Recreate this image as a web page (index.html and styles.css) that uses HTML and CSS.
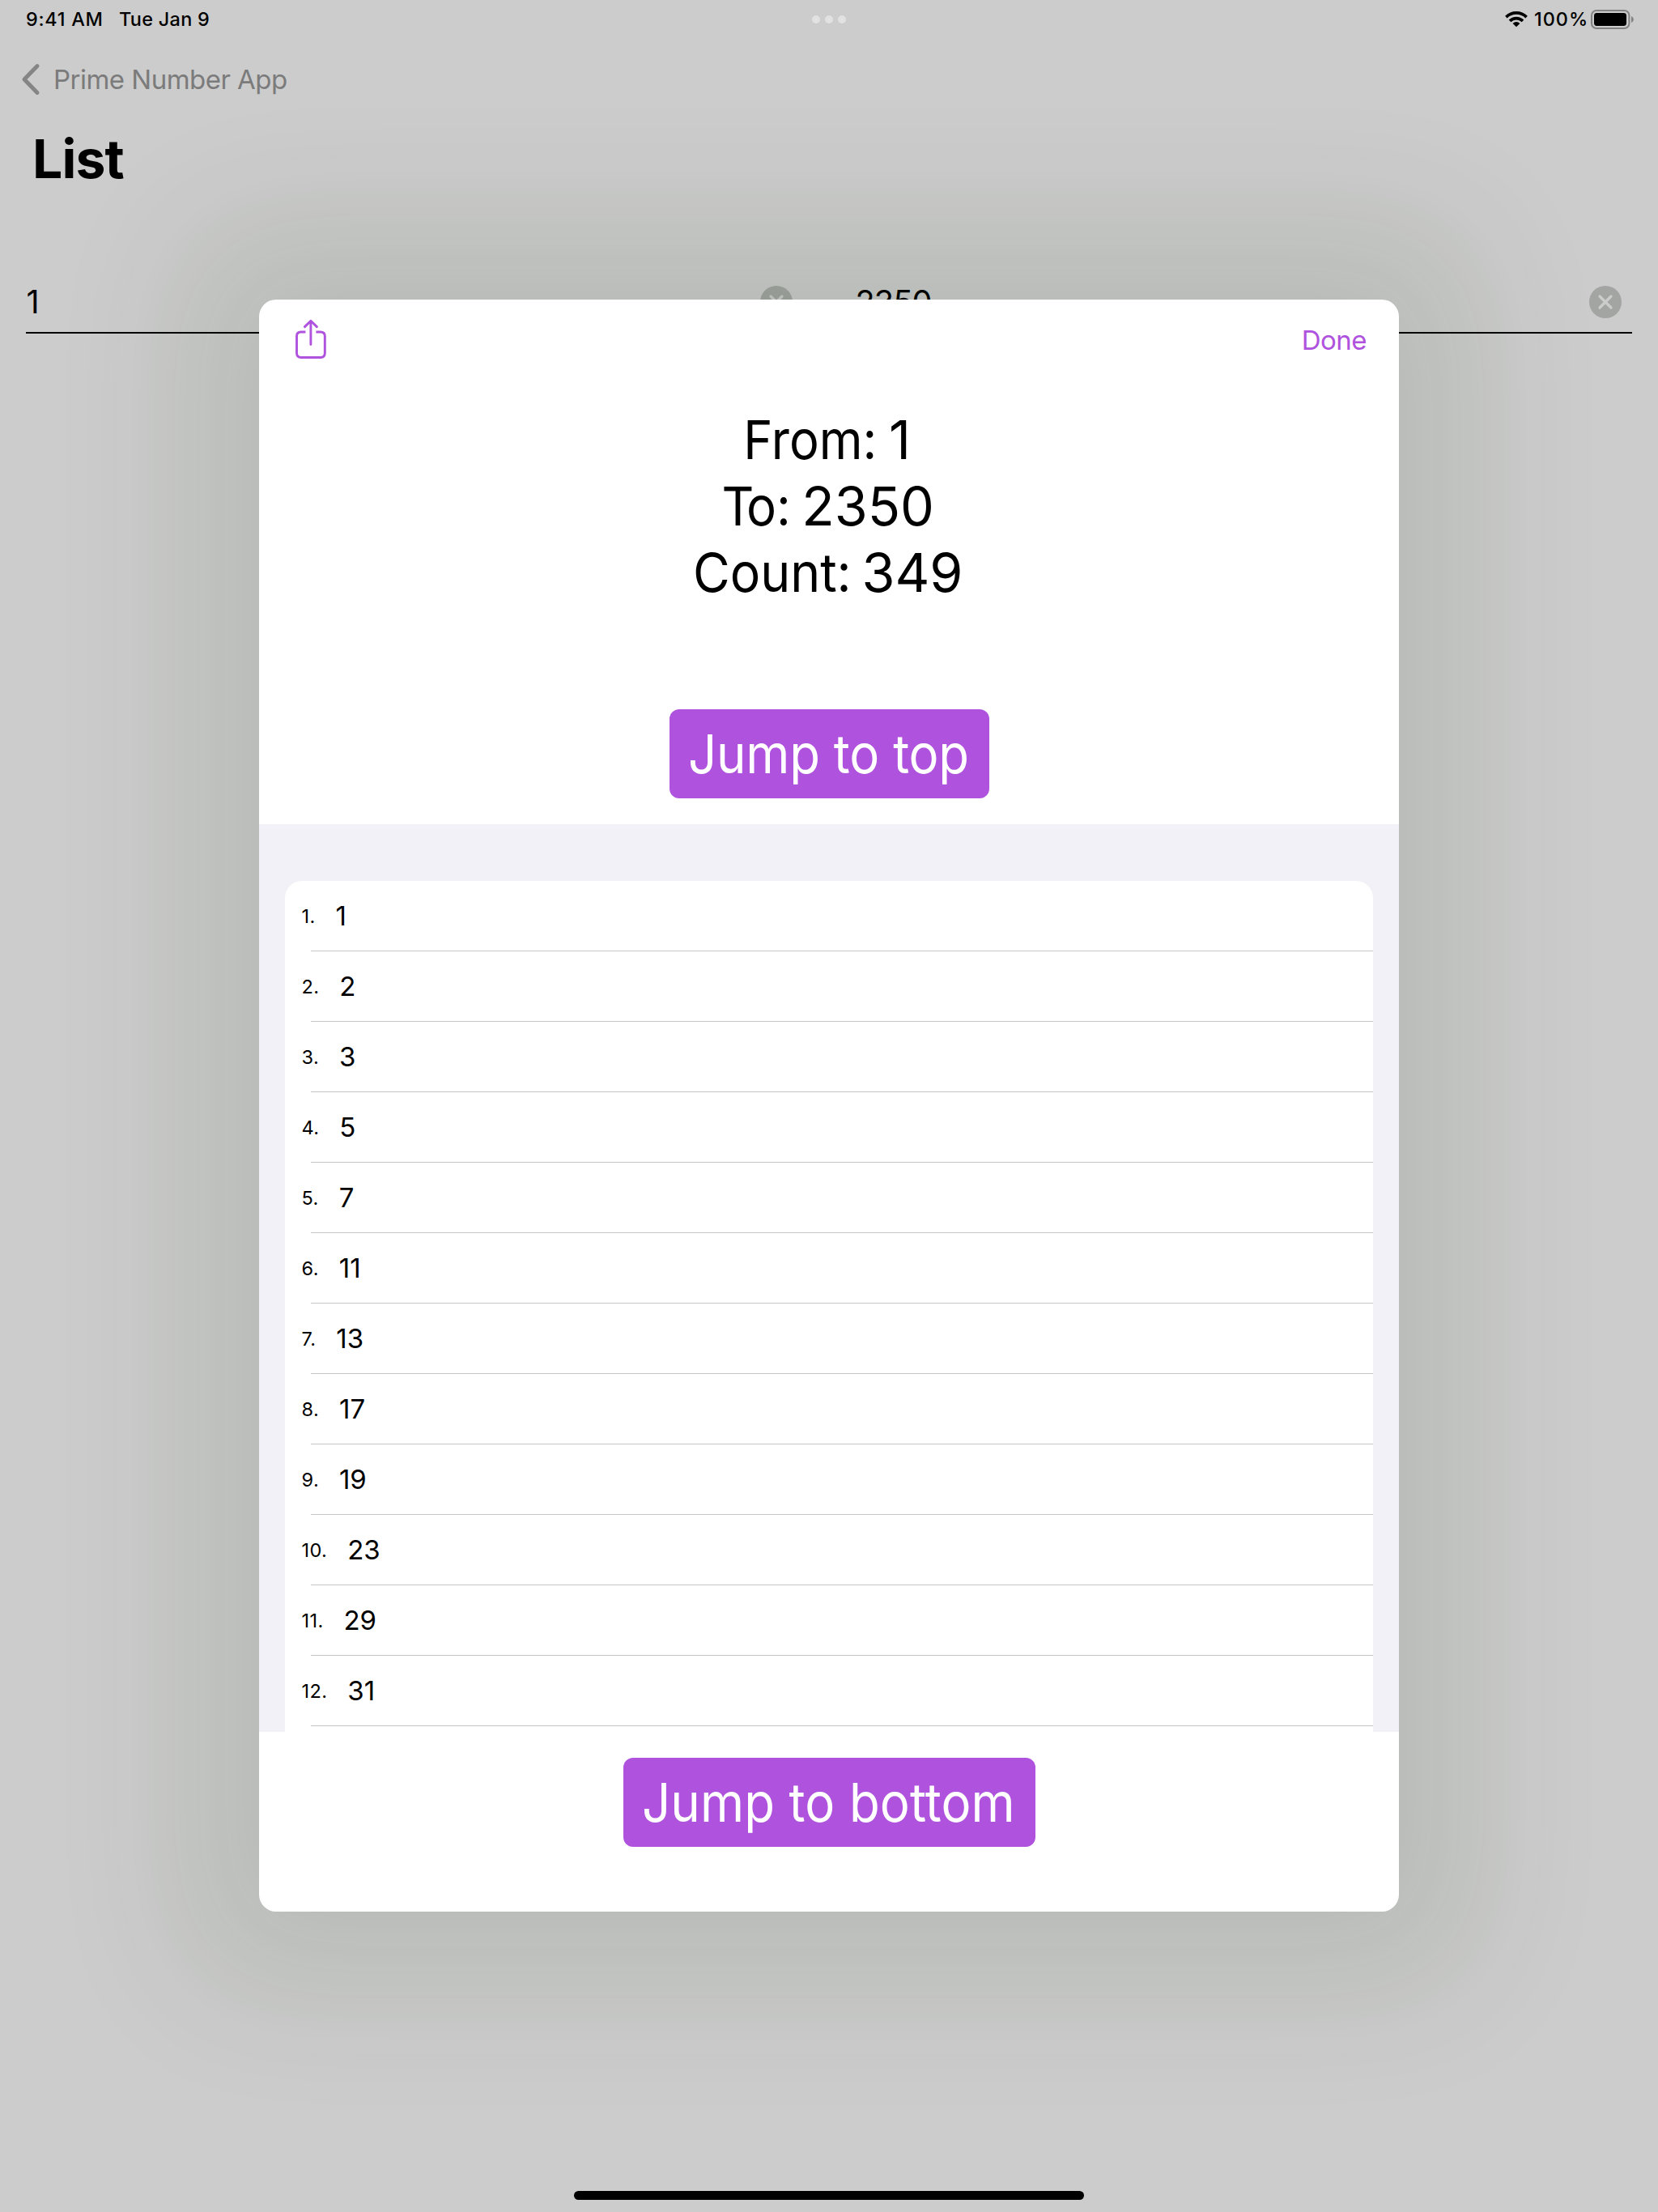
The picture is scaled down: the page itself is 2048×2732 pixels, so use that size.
FILE: index.html
```html
<!DOCTYPE html>
<html lang="en">
<head>
<meta charset="utf-8">
<title>List</title>
<link rel="stylesheet" href="styles.css">
</head>
<body>
<div class="screen">
  <header class="status-bar">
    <span class="status-time">9:41 AM</span>
    <span class="status-date">Tue Jan 9</span>
    <span class="status-right">
      <svg class="wifi" width="28" height="22" viewBox="0 0 28 22">
        <g fill="none" stroke="#000" stroke-width="3.7">
          <path d="M1.4 8.1 A18 18 0 0 1 26.6 8.1"/>
          <path d="M6 12.9 A11.3 11.3 0 0 1 22 12.9"/>
        </g>
        <path d="M14 20.3 L9.6 15.9 A6.3 6.3 0 0 1 18.4 15.9 Z"/>
      </svg>
      <span class="status-percent">100%</span>
      <svg class="battery" width="54" height="24" viewBox="0 0 54 24">
        <rect x="1" y="1" width="46.4" height="22" rx="6" fill="none" stroke="#828282" stroke-width="2"/>
        <rect x="4" y="4" width="40" height="16" rx="3.4"/>
        <path d="M50 8 C53.8 9.4 53.8 14.6 50 16 Z" fill="#828282"/>
      </svg>
    </span>
    <span class="multitask"><i></i><i></i><i></i></span>
  </header>

  <nav class="nav-bar">
    <svg width="24" height="40" viewBox="0 0 24 40"><path d="M20 3.6 L4 20 L20 36.4" fill="none" stroke="#858585" stroke-width="5" stroke-linecap="round" stroke-linejoin="round"/></svg>
    <span class="nav-back">Prime Number App</span>
  </nav>
  <h1 class="page-title">List</h1>

  <div class="fields">
    <div class="field">
      <span class="field-value">1</span>
      <svg class="clear" width="40" height="40" viewBox="0 0 40 40"><circle cx="20" cy="20" r="20"/><path d="M13 13 L27 27 M27 13 L13 27"/></svg>
    </div>
    <div class="field">
      <span class="field-value">2350</span>
      <svg class="clear" width="40" height="40" viewBox="0 0 40 40"><circle cx="20" cy="20" r="20"/><path d="M13 13 L27 27 M27 13 L13 27"/></svg>
    </div>
  </div>

  <main class="sheet">
    <div class="sheet-bar">
      <svg class="share" width="40" height="50" viewBox="0 0 40 50"><path d="M13.4 16 H7.6 Q2.5 16 2.5 21.1 V42 Q2.5 47.5 8 47.5 H32 Q37.3 47.5 37.3 42 V21.1 Q37.3 16 32 16 H26.4"/><path d="M19.9 31.5 V2.4 M12.4 9.6 L19.9 2.2 L27.4 9.6"/></svg>
      <span class="done">Done</span>
    </div>
    <div class="summary">
      <p class="line line-from"><span class="label">From:</span> <span>1</span></p>
      <p class="line line-to"><span class="label"><span class="kern">T</span>o:</span> <span>2350</span></p>
      <p class="line line-count"><span class="label">Count:</span> <span>349</span></p>
    </div>
    <div class="jump jump-top"><span>Jump to top</span></div>
    <section class="list-area">
      <ol class="list">
        <li><span class="index">1.</span><span class="number">1</span></li>
        <li><span class="index">2.</span><span class="number">2</span></li>
        <li><span class="index">3.</span><span class="number">3</span></li>
        <li><span class="index">4.</span><span class="number">5</span></li>
        <li><span class="index">5.</span><span class="number">7</span></li>
        <li><span class="index">6.</span><span class="number">11</span></li>
        <li><span class="index">7.</span><span class="number">13</span></li>
        <li><span class="index">8.</span><span class="number">17</span></li>
        <li><span class="index">9.</span><span class="number">19</span></li>
        <li><span class="index">10.</span><span class="number">23</span></li>
        <li><span class="index">11.</span><span class="number">29</span></li>
        <li><span class="index">12.</span><span class="number">31</span></li>
      </ol>
    </section>
    <div class="jump jump-bottom"><span>Jump to bottom</span></div>
  </main>

  <div class="home-indicator"></div>
</div>
</body>
</html>
```

FILE: styles.css
```css
* { box-sizing: border-box; margin: 0; padding: 0; }

body {
  font-family: Inter, "Liberation Sans", sans-serif;
  color: #000;
  background: #ccc;
}

.screen {
  position: relative;
  width: 2048px;
  height: 2732px;
  overflow: hidden;
  background: #ccc;
}

svg { display: block; flex: none; }
span { white-space: nowrap; }

/* status bar */
.status-bar {
  position: relative;
  display: flex;
  align-items: center;
  height: 47px;
  padding: 0 29px 0 32px;
  font-size: 23.4px;
  font-weight: 500;
}
.status-time { width: 115px; letter-spacing: 0.73px; }
.status-date { letter-spacing: 0.3px; }
.status-right { display: flex; align-items: center; margin-left: auto; }
.wifi { margin-right: 8px; }
.status-percent { width: 70px; letter-spacing: 1px; }
.battery { margin-top: 1px; }
.multitask {
  position: absolute;
  left: 1003px;
  top: 19px;
  display: flex;
  gap: 6px;
}
.multitask i { width: 10px; height: 10px; border-radius: 50%; background: #e1e1e1; }

/* navigation */
.nav-bar {
  display: flex;
  align-items: center;
  gap: 16px;
  height: 102px;
  padding-left: 26px;
}
.nav-back { font-size: 33px; letter-spacing: -0.52px; color: #7b7b7b; }
.page-title {
  height: 94px;
  padding-left: 40px;
  font-size: 66px;
  line-height: 94px;
  letter-spacing: -0.9px;
}

/* range inputs */
.fields { display: flex; gap: 64px; padding: 91px 32px 0; }
.field {
  display: flex;
  flex: 1;
  align-items: center;
  justify-content: space-between;
  height: 78px;
  padding: 2px 13px 0 0;
  border-bottom: 2px solid #000;
}
.field-value { padding-left: 0.5px; font-size: 39.5px; letter-spacing: -0.8px; }
.clear circle { fill: rgba(0, 8, 0, 0.2); }
.clear path { fill: none; stroke: #ccc; stroke-width: 3.2; stroke-linecap: round; }

/* modal sheet */
.sheet {
  position: absolute;
  left: 320px;
  top: 370px;
  display: flex;
  flex-direction: column;
  align-items: center;
  width: 1408px;
  height: 1991px;
  border-radius: 21px;
  background: #fff;
  box-shadow: 0 0 170px 88px rgba(22, 58, 20, 0.113);
}
.sheet-bar {
  display: flex;
  align-items: center;
  justify-content: space-between;
  align-self: stretch;
  height: 100px;
  padding: 0 40px 0 44px;
}
.share { margin-bottom: 2px; }
.share path {
  fill: none;
  stroke: #af52de;
  stroke-width: 2.9;
  stroke-linecap: round;
  stroke-linejoin: round;
}
.share path:first-child { stroke-linecap: butt; }
.done { font-size: 33px; letter-spacing: -0.53px; color: #af52de; }

.summary { padding-top: 32px; font-size: 66.4px; line-height: 82px; }
.line { display: flex; justify-content: center; }
.label { transform: scaleX(0.93); transform-origin: right; }
.line-from { gap: 15px; padding-right: 4px; }
.line-from .label { margin-left: -14px; transform: scaleX(0.925); }
.line-to { gap: 13.4px; padding-right: 2px; }
.line-to .label { margin-left: -7px; }
.kern { letter-spacing: -10px; }
.line-count { gap: 13.2px; padding-right: 2px; }
.line-count .label { margin-left: -13px; transform: scaleX(0.942); }

.jump {
  flex: none;
  height: 110px;
  padding-left: 22.7px;
  border-radius: 12px;
  font-size: 66.4px;
  line-height: 110px;
  color: #fff;
  background: #af52de;
}
.jump span { display: inline-block; transform: scaleX(0.93); transform-origin: left; }
.jump-top { width: 395px; margin: 128px 0 32px 1px; letter-spacing: -0.25px; }
.jump-bottom { width: 509px; margin: 32px 0 0 1px; letter-spacing: 0.12px; }

/* grouped list, cut off at the bottom edge of its viewport */
.list-area {
  flex: none;
  align-self: stretch;
  height: 1121px;
  padding: 70px 32px 0;
  overflow: hidden;
  background: #f2f1f7;
}
.list {
  height: 1100px;
  border-radius: 21px;
  background: #fff;
  list-style: none;
}
.list li {
  display: flex;
  align-items: center;
  height: 87px;
  padding-left: 20.5px;
  background: linear-gradient(#c6c6c8, #c6c6c8) 32px 100% / 100% 1px no-repeat;
}
.index { font-size: 23.5px; letter-spacing: 0.4px; }
.number { margin: 0 0 2px 24.9px; font-size: 33px; }

.home-indicator {
  position: absolute;
  left: 709px;
  top: 2706px;
  width: 630px;
  height: 11px;
  border-radius: 6px;
  background: #000;
}
```
